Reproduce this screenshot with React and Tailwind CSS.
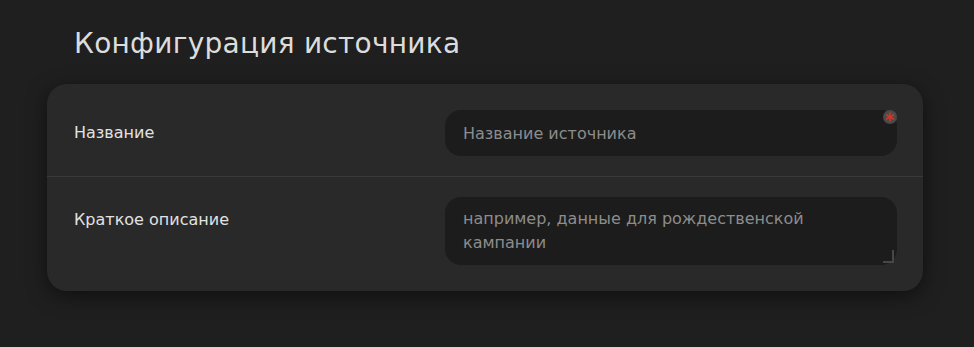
export default function App() {
  return (
    <div className="min-h-screen bg-[#1f1f1f] pl-[47px] pr-[51px] pt-[26px] pb-10 font-['DejaVu_Sans',sans-serif]">
      <h1 className="pl-[27px] text-[28px] leading-9 tracking-[0.25px] text-[#dcdcdc]">
        Конфигурация источника
      </h1>
      <div className="mt-[22px] rounded-[20px] bg-[#292929] py-[6px] shadow-[0_5px_20px_rgba(0,0,0,0.5)]">
        <div className="flex justify-between pl-[27px] pr-[26px] py-5 border-b border-[#393939]">
          <label className="pt-[11px] text-base leading-6 text-[#e2e2e2]">Название</label>
          <div className="relative w-[452px]">
            <input
              type="text"
              placeholder="Название источника"
              className="block w-full h-[46px] rounded-2xl bg-[#1c1c1c] px-[18px] text-base text-[#e2e2e2] outline-none placeholder:text-[#8c8c8c]"
            />
            <span className="absolute -right-[0px] top-0 flex h-[14px] w-[14px] items-center justify-center rounded-full bg-[#4a4a4a]">
              <svg width="10" height="10" viewBox="0 0 10 10" stroke="#d0372a" strokeWidth="1.6" strokeLinecap="round">
                <line x1="5" y1="1" x2="5" y2="9" />
                <line x1="1.5" y1="3" x2="8.5" y2="7" />
                <line x1="1.5" y1="7" x2="8.5" y2="3" />
              </svg>
            </span>
          </div>
        </div>
        <div className="flex justify-between pl-[27px] pr-[26px] py-5">
          <label className="pt-[11px] text-base leading-6 text-[#e2e2e2]">Краткое описание</label>
          <div className="relative w-[452px]">
            <textarea
              rows={2}
              placeholder="например, данные для рождественской кампании"
              className="block w-full h-[68px] resize-none rounded-2xl bg-[#1c1c1c] px-[18px] py-[10px] text-base leading-6 text-[#e2e2e2] outline-none placeholder:text-[#8c8c8c]"
            />
            <span className="absolute right-[3px] bottom-[2px] h-[13px] w-[11px] border-r-2 border-b-2 border-[#474747]" />
          </div>
        </div>
      </div>
    </div>
  );
}
